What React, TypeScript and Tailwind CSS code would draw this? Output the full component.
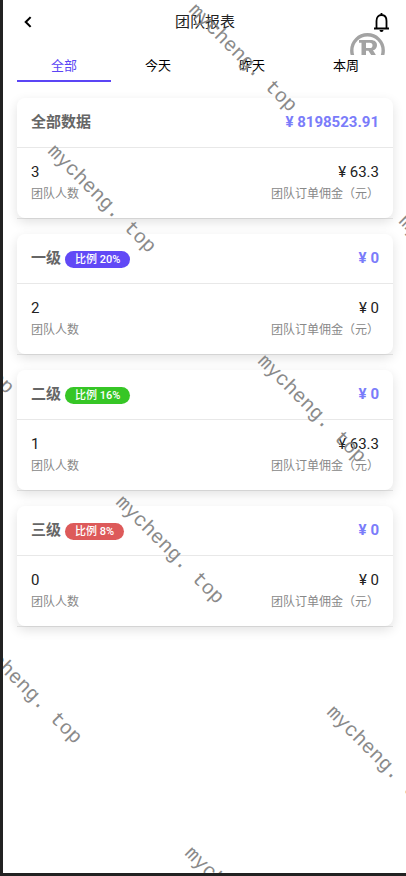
import React, { useState } from 'react';
import clsx from 'clsx';

interface Level {
  id: string;
  title: string;
  ratio?: string;
  badgeClass?: string;
  total: string;
  members: number;
  commission: string;
}

const tabs = ['全部', '今天', '昨天', '本周'];

const levels: Level[] = [
  { id: 'all', title: '全部数据', total: '8198523.91', members: 3, commission: '63.3' },
  { id: 'l1', title: '一级', ratio: '20%', badgeClass: 'bg-[#6149f6]', total: '0', members: 2, commission: '0' },
  { id: 'l2', title: '二级', ratio: '16%', badgeClass: 'bg-[#36c626]', total: '0', members: 1, commission: '63.3' },
  { id: 'l3', title: '三级', ratio: '8%', badgeClass: 'bg-[#dd5a5a]', total: '0', members: 0, commission: '0' },
];

// Start points of the diagonal site marks on the page canvas
const marks = [
  { x: 197, y: -1 },
  { x: 56, y: 140 },
  { x: 407, y: 210 },
  { x: -86, y: 281 },
  { x: 266, y: 350 },
  { x: 124, y: 491 },
  { x: -18, y: 631 },
  { x: 335, y: 701 },
  { x: 193, y: 842 },
];

const Watermark: React.FC = () => (
  <div aria-hidden="true" className="pointer-events-none absolute inset-0 overflow-hidden">
    {marks.map((m) => (
      <span
        key={`${m.x}-${m.y}`}
        className="absolute origin-top-left rotate-45 whitespace-pre font-['Liberation_Mono',monospace] text-[20px] leading-6 text-[#8a8a8a]"
        style={{ left: m.x, top: m.y }}
      >
        mycheng. top
      </span>
    ))}
    <svg className="absolute top-8 right-5" width="36" height="23" viewBox="0 0 36 23">
      <circle cx="17.5" cy="18.5" r="15.7" fill="none" stroke="#a3a3a3" strokeWidth="3.4" />
      <path
        fill="#a3a3a3"
        fillRule="evenodd"
        d="M9 8h11.500c4.500 0 6.500 2.200 6.500 5.200 0 2.600-1.600 4.500-4 5.100L26.500 24h-4.700l-3.400-5.300H16V24h-4.500V10.800H9zM16 10.800v5.200h3.800c1.800 0 2.700-1 2.700-2.600s-.9-2.600-2.700-2.600z"
      />
    </svg>
  </div>
);

const LevelCard: React.FC<{ level: Level }> = ({ level }) => (
  <div className="border-b border-[#e8e8e8]">
    <section className="rounded-lg bg-white shadow-[0_4px_12px_rgba(0,0,0,0.12)]">
      <div className="flex h-[50px] items-center justify-between border-b border-[#e8e8e8] px-3.5">
        <h2 className="flex items-center gap-1 text-[15px] font-bold text-[#666]">
          {level.title}
          {level.ratio && (
            <span
              className={clsx(
                'mt-0.5 rounded-full px-2.5 text-[11px] leading-[17px] font-medium text-white',
                level.badgeClass
              )}
            >
              比例 {level.ratio}
            </span>
          )}
        </h2>
        <span className="text-[15px] font-bold text-[#7a7cfa]">¥ {level.total}</span>
      </div>
      <dl className="flex justify-between px-3.5 pt-[13px] pb-[13px]">
        <div className="flex flex-col-reverse">
          <dt className="text-[12px] leading-[22px] text-[#888]">团队人数</dt>
          <dd className="text-[15px] leading-[22px] text-[#222]">{level.members}</dd>
        </div>
        <div className="flex flex-col-reverse text-right">
          <dt className="text-[12px] leading-[22px] text-[#888]">团队订单佣金（元）</dt>
          <dd className="text-[15px] leading-[22px] text-[#222]">¥ {level.commission}</dd>
        </div>
      </dl>
    </section>
  </div>
);

export const TeamReport: React.FC = () => {
  const [active, setActive] = useState(tabs[0]);

  return (
    <div className="relative min-h-screen overflow-hidden border-b-3 border-l-3 border-[#222] bg-white font-[Roboto,'Noto_Sans_CJK_SC',sans-serif]">
      <header className="flex h-11 items-center justify-between pr-3.5 pl-[15px]">
        <button type="button" aria-label="返回" className="flex w-5 justify-center">
          <svg width="18" height="18" viewBox="0 0 24 24" fill="none" stroke="#000" strokeWidth="2.8">
            <path d="M15.500 5.500 9 12l6.500 6.500" />
          </svg>
        </button>
        <h1 className="text-[15px] text-[#222]">团队报表</h1>
        <button type="button" aria-label="通知">
          <svg width="20" height="22" viewBox="0 0 20 22" fill="none" stroke="#000" strokeWidth="1.8">
            <path d="M2 17.500h15M4.500 17.500V10c0-3.800 2-6 5-6s5 2.200 5 6v7.500M9.500 4V2" />
            <path d="M7.500 19h4a2 2 0 0 1-4 0z" fill="#000" stroke="none" />
          </svg>
        </button>
      </header>

      {/* Period tabs */}
      <div role="tablist" className="mr-[13px] ml-3.5 grid grid-cols-4">
        {tabs.map((tab) => (
          <button
            key={tab}
            type="button"
            role="tab"
            aria-selected={active === tab}
            onClick={() => setActive(tab)}
            className={clsx(
              'h-[38px] border-b-2 pt-2 text-[13px]',
              active === tab ? 'border-[#5b45f5] text-[#5b45f5]' : 'border-transparent text-black'
            )}
          >
            {tab}
          </button>
        ))}
      </div>

      <main className="flex flex-col gap-[15px] pt-4 pr-[13px] pb-4 pl-3.5">
        {levels.map((level) => (
          <LevelCard key={level.id} level={level} />
        ))}
      </main>

      <Watermark />
    </div>
  );
};

export default TeamReport;
